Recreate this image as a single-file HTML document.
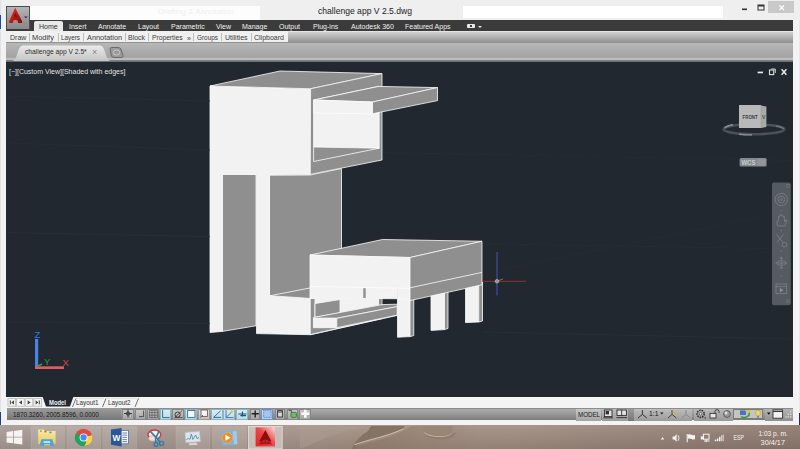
<!DOCTYPE html>
<html>
<head>
<meta charset="utf-8">
<title>challenge app V 2.5.dwg</title>
<style>
html,body{margin:0;padding:0;}
body{width:800px;height:449px;overflow:hidden;position:relative;background:#f2f2f2;font-family:"Liberation Sans",sans-serif;}
.abs{position:absolute;}
.t{position:absolute;white-space:nowrap;line-height:1;}
#titlebar{left:0;top:0;width:800px;height:20px;background:#efefef;}
#tabbar{left:29px;top:20px;width:765px;height:11px;background:#3b3b3b;}
#row2{left:6px;top:31px;width:788px;height:12px;background:linear-gradient(#cfcfcf,#8e8e8e);border-top:1px solid #e4e4e4;box-sizing:border-box;}
#row2l{left:6px;top:31px;width:282px;height:11px;background:#f0f0f0;}
#row3{left:6px;top:43px;width:788px;height:17.5px;background:linear-gradient(#b8b8b8 0%,#a2a2a2 80%,#bcbcbc 83%,#bebebe 100%);}
#row3b{left:6px;top:60px;width:788px;height:2.6px;background:linear-gradient(#8a8a8a,#6a6a6a 60%,#44484c);}
#draw{left:6px;top:62.4px;width:787.4px;height:334.8px;background:#212830;}
.tab1{font-size:7px;line-height:7px;color:#f0f0f0;top:22.5px;}
.tab2{font-size:7px;line-height:7px;color:#3a3a3a;top:34px;}
.sep{position:absolute;top:33px;width:1px;height:8px;background:#bcbcbc;}
.sb{top:408.6px;height:11.6px;border:1px solid #888;box-sizing:border-box;}
</style>
</head>
<body>
<!-- title bar -->
<div class="abs" id="titlebar"></div>
<div class="abs" style="left:462.5px;top:5.5px;width:260px;height:12px;background:#ffffff;"></div>
<div class="abs" style="left:29.7px;top:5.5px;width:230px;height:14.5px;background:#fdfdfd;"></div>
<div class="t" style="left:158px;top:8px;font-size:8px;color:#efefef;">Drafting &amp; Annotation</div>
<div class="t" id="title" style="left:318px;top:5.8px;font-size:9.4px;transform:scaleX(0.915);transform-origin:0 0;color:#222;">challenge app V 2.5.dwg</div>
<!-- window buttons -->
<div class="abs" style="left:768px;top:1px;width:26px;height:12px;background:#c9c9c9;"></div>
<svg class="abs" style="left:740px;top:0" width="60" height="20" viewBox="0 0 60 20">
  <rect x="2" y="8.5" width="5" height="1.6" fill="#333"/>
  <rect x="18" y="5" width="6" height="5" fill="none" stroke="#333" stroke-width="1"/>
  <rect x="18" y="5" width="6" height="1.5" fill="#333"/>
  <path d="M39.5 5.5 L44 10 M44 5.5 L39.5 10" stroke="#fff" stroke-width="1.2" fill="none"/>
</svg>

<!-- ribbon tab bar -->
<div class="abs" id="tabbar"></div>
<div class="abs" style="left:34px;top:21px;width:29px;height:11px;background:#e9e9e9;border-radius:2px 2px 0 0;"></div>
<div class="t tab1" style="left:39px;color:#333;">Home</div>
<div class="t tab1" style="left:69px;">Insert</div>
<div class="t tab1" style="left:98px;">Annotate</div>
<div class="t tab1" style="left:138px;">Layout</div>
<div class="t tab1" style="left:171px;">Parametric</div>
<div class="t tab1" style="left:216px;">View</div>
<div class="t tab1" style="left:242px;">Manage</div>
<div class="t tab1" style="left:279px;">Output</div>
<div class="t tab1" style="left:313px;">Plug-ins</div>
<div class="t tab1" style="left:351px;">Autodesk 360</div>
<div class="t tab1" style="left:405px;">Featured Apps</div>
<div class="abs" style="left:467px;top:24px;width:8px;height:4px;background:#e8e8e8;border-radius:1px;"></div>
<div class="abs" style="left:470px;top:25px;width:2px;height:2px;background:#3b3b3b;"></div>
<div class="abs" style="left:478px;top:26px;width:0;height:0;border-left:2px solid transparent;border-right:2px solid transparent;border-top:2px solid #e8e8e8;"></div>

<!-- ribbon panel row -->
<div class="abs" id="row2"></div>
<div class="abs" id="row2l"></div>
<div class="t tab2" style="left:10px;">Draw</div><div class="sep" style="left:29px;"></div>
<div class="t tab2" style="left:32px;font-size:7.45px;">Modify</div><div class="sep" style="left:58px;"></div>
<div class="t tab2" style="left:61px;font-size:6.35px;">Layers</div><div class="sep" style="left:83px;"></div>
<div class="t tab2" style="left:87px;font-size:7.35px;">Annotation</div><div class="sep" style="left:125px;"></div>
<div class="t tab2" style="left:128px;">Block</div><div class="sep" style="left:148px;"></div>
<div class="t tab2" style="left:152px;font-size:6.7px;">Properties</div>
<div class="t tab2" style="left:187px;font-size:7px;top:35px;">»</div><div class="sep" style="left:193px;"></div>
<div class="t tab2" style="left:197px;font-size:6.4px;">Groups</div><div class="sep" style="left:221px;"></div>
<div class="t tab2" style="left:225px;">Utilities</div><div class="sep" style="left:251px;"></div>
<div class="t tab2" style="left:254px;">Clipboard</div>

<!-- file tab row -->
<div class="abs" id="row3"></div>
<div class="abs" id="row3b"></div>
<svg class="abs" style="left:6px;top:43px" width="140" height="19" viewBox="0 0 140 19">
  <defs><linearGradient id="ftab" x1="0" y1="0" x2="0" y2="1"><stop offset="0" stop-color="#ebebeb"/><stop offset="1" stop-color="#c4c4c4"/></linearGradient></defs>
  <path d="M6 18 C12 18 11 2.5 17 2.5 L94 2.5 C100 2.5 99 18 105 18 Z" fill="url(#ftab)"/>
  <path d="M104 6 Q104 4.5 106 4.5 L112 4.5 Q114 4.5 115 6 L117 13 Q117 14.5 115.5 14.5 L108 14.5 Q106 14.5 105.5 13 Z" fill="#9a9a9a" stroke="#6c6c6c" stroke-width="1"/>
  <ellipse cx="110.5" cy="9.5" rx="3.2" ry="2.6" fill="none" stroke="#c8c8c8" stroke-width="1"/>
</svg>
<div class="t" id="ftext" style="left:25px;top:49px;font-size:6.7px;color:#2a2a2a;">challenge app V 2.5*</div>
<div class="t" style="left:92px;top:48px;font-size:9px;color:#888;">×</div>

<!-- app button -->
<div class="abs" style="left:6px;top:5.5px;width:23.7px;height:25px;background:linear-gradient(#b6b6b6,#9c9c9c 50%,#888);border:1px solid #4c4c4c;border-bottom:2px solid #3c3c3c;box-sizing:border-box;"></div>
<svg class="abs" style="left:0;top:0" width="40" height="36" viewBox="0 0 40 36">
  <defs><linearGradient id="alogo" x1="0" y1="0" x2="1" y2="1"><stop offset="0" stop-color="#e23a2c"/><stop offset="0.5" stop-color="#c01c16"/><stop offset="1" stop-color="#7c0c0a"/></linearGradient></defs>
  <path d="M15.2 7.8 L22.2 21.4 L22 22.9 L18.2 22.9 L17.6 20.6 Q15.6 19.6 13.4 20.6 L12.8 22.9 L9.2 22.9 L9 21.4 Z" fill="url(#alogo)"/>
  <path d="M15.4 12.6 L17.4 17.6 Q15.4 17 13.4 17.6 Z" fill="#8e100d"/>
  <path d="M24 16.4 L27.8 16.4 L25.9 18.3 Z" fill="#2a2a66"/>
</svg>
<!-- drawing area -->
<div class="abs" id="draw"></div>
<div class="t" style="left:9px;top:67.5px;font-size:7px;color:#e4e4e4;" id="vlabel">[−][Custom View][Shaded with edges]</div>
<svg class="abs" id="scene" style="left:0;top:0" width="800" height="449" viewBox="0 0 800 449">
  <g stroke="#fbfbfb" stroke-width="0.8" stroke-linejoin="round">
  <!-- column gray faces -->
  <polygon points="222.4,174.4 256,174.4 256,325.8 222.4,331.4" fill="#8f8f8f"/>
  <polygon points="269.5,175 310.3,175 341.5,168.5 341.5,300 269.5,300" fill="#8f8f8f"/>
  <line x1="270" y1="295.7" x2="312" y2="287.6"/>
  <!-- white front: left strip, top box front -->
  <polygon points="210,86 310.6,88.75 310.3,174.5 269.5,175 269.5,295.7 310.3,298.4 310.3,334.7 256.5,333.6 256.5,174.5 222.4,174.4 222.4,331.4 210,332.5" fill="#f2f2f2"/>
  <!-- top box -->
  <polygon points="210,86 280,71 382,73.6 310.6,88.75" fill="#8f8f8f"/>
  <polygon points="310.6,88.75 382,73.6 382,160 310.3,174.3" fill="#8f8f8f"/>
  <polygon points="313.6,100 379.2,86.3 379.2,148.2 313.6,147" fill="#f2f2f2"/>
  <polygon points="313.6,147 379.2,148.2 313.6,161.5" fill="#8f8f8f"/>
  <line x1="313.6" y1="113" x2="379" y2="113.6" stroke="#fbfbfb"/>
  <!-- shelf -->
  <polygon points="313.75,100 378.5,86.4 437.5,87.6 372.5,102" fill="#8f8f8f"/>
  <polygon points="313.75,100 372.5,102 372.5,113.75 313.75,113" fill="#f2f2f2"/>
  <polygon points="372.5,102 437.5,87.6 437.5,100.6 372.5,113.75" fill="#8f8f8f"/>
  <!-- lower box right face -->
  <polygon points="310.3,298 382,298 382,318.6 310.3,334.7" fill="#8f8f8f"/>
  <polygon points="314.5,299 379,299 379,306 314.5,318" fill="#f2f2f2" stroke="none"/>
  <polygon points="315,303.5 340,299.6 340,312.8 315,317.3" fill="#8f8f8f"/>
  <polygon points="313.4,317.5 382,304.6 397.2,304.2 397.2,306.6 336.75,318.3 313.4,318.3" fill="#8f8f8f"/>
  <polygon points="313.4,318.3 336.75,318.3 336.75,327.7 313.4,327.7" fill="#f2f2f2"/>
  <polygon points="336.75,318.3 397.2,306.6 397.2,315.2 336.75,327.7" fill="#8f8f8f"/>
  <line x1="310.3" y1="334.7" x2="397.2" y2="315.4"/>
  <!-- table legs -->
  <polygon points="465.5,286 478.75,283 478.75,322 465.5,322.6" fill="#f2f2f2"/>
  <polygon points="478.75,283 482.5,282 482.5,321 478.75,322" fill="#8f8f8f"/>
  <polygon points="431,294 444.5,291 444.5,329.6 431,330.4" fill="#f2f2f2"/>
  <polygon points="444.5,291 448,290 448,328.4 444.5,329.6" fill="#8f8f8f"/>
  <polygon points="397.5,298 410,298.75 410,336.6 397.5,337.2" fill="#f2f2f2"/>
  <polygon points="410,298.75 413.75,297.5 413.75,335.6 410,336.6" fill="#8f8f8f"/>
  <!-- table body -->
  <polygon points="310,255 382.5,239.5 482,241.25 410,257.5" fill="#8f8f8f"/>
  <polygon points="310,255 410,257.5 410,298.75 310,298.4" fill="#f2f2f2"/>
  <polygon points="410,257.5 482,241.25 482,284.8 410,300.6" fill="#8f8f8f"/>
  <line x1="310" y1="286.4" x2="410" y2="288.4" stroke="#fcfcfc"/>
  <line x1="410" y1="287.8" x2="482" y2="272.4"/>
  <line x1="397.4" y1="288" x2="397.4" y2="298.4" stroke="#e4e4e4" stroke-width="0.6"/>
  <rect x="363.3" y="288.2" width="2.4" height="9.8" fill="#8f8f8f" stroke="none"/>
  <rect x="379.2" y="299" width="2.3" height="4.5" fill="#8f8f8f" stroke="none"/>
  </g>
  <!-- cursor -->
  <line x1="497" y1="252" x2="497" y2="295.5" stroke="#3f4a9a" stroke-width="1.3"/>
  <line x1="482.5" y1="281.3" x2="526" y2="281.3" stroke="#8a3236" stroke-width="1"/>
  <line x1="497" y1="281" x2="503" y2="279" stroke="#4f8a3a" stroke-width="1"/>
  <circle cx="497" cy="281.3" r="1.8" fill="#8d9499" stroke="#c8c8c8" stroke-width="0.6"/>
  <!-- faint horizon lines -->
  <g stroke="#283038" stroke-width="0.9" fill="none">
  <line x1="7" y1="232.6" x2="210" y2="236.6"/>
  <line x1="7" y1="322" x2="210" y2="323.4"/>
  <line x1="483" y1="332" x2="793" y2="339"/>
  <line x1="483" y1="243.7" x2="793" y2="249" stroke="#252d35"/>
  <line x1="500" y1="270" x2="793" y2="210" stroke="#252d35"/>
  <line x1="383" y1="152.6" x2="793" y2="160.4" stroke="#242c34"/>
  <line x1="7" y1="96" x2="210" y2="101" stroke="#252d35"/>
  <line x1="7" y1="143" x2="210" y2="150" stroke="#252d35"/>
  </g>
  <!-- drawing window controls -->
  <rect x="757.6" y="71.6" width="5.4" height="1.7" fill="#e8e8e8"/>
  <rect x="769.5" y="70" width="4.2" height="4.6" fill="none" stroke="#e0e0e0" stroke-width="1.1"/>
  <path d="M771.2 69 L775.3 69 L775.3 73" fill="none" stroke="#e0e0e0" stroke-width="0.9"/>
  <path d="M781.6 69.3 L786.4 74.7 M786.4 69.3 L781.6 74.7" stroke="#f0f0f0" stroke-width="1.4" fill="none"/>
  <!-- viewcube -->
  <ellipse cx="754" cy="129.3" rx="30.4" ry="5" fill="none" stroke="#4a5157" stroke-width="2.6"/>
  <path d="M724.5 128 Q727 125.6 733 124.8" stroke="#8a9096" stroke-width="1.6" fill="none"/>
  <path d="M739 134.2 Q746 135 752 134.8" stroke="#8a9096" stroke-width="1.4" fill="none"/>
  <path d="M776 126 Q782 127 784 129" stroke="#70767c" stroke-width="1.4" fill="none"/>
  <polygon points="761,105.5 766.4,106.6 766.4,127 761,128" fill="#a9a9a9"/>
  <rect x="739" y="105" width="22" height="23" fill="#b9b9b9"/>
  <line x1="761" y1="105.5" x2="761" y2="128" stroke="#8c8c8c" stroke-width="0.6" stroke-dasharray="1 1"/>
  <text x="742.6" y="119" font-family="Liberation Sans, sans-serif" font-size="5.4" font-weight="bold" fill="#3c4046" textLength="15" lengthAdjust="spacingAndGlyphs">FRONT</text>
  <text x="762" y="119" font-family="Liberation Sans, sans-serif" font-size="5" font-weight="bold" fill="#50545a">V</text>
  <!-- WCS -->
  <rect x="739.6" y="158" width="27" height="8.6" rx="1.5" fill="#858a8f"/>
  <rect x="757.5" y="159.2" width="8" height="6.2" rx="1" fill="#92979c"/>
  <text x="741.4" y="165" font-family="Liberation Sans, sans-serif" font-size="6.4" font-weight="bold" fill="#c9cdd1" textLength="14" lengthAdjust="spacingAndGlyphs">WCS</text>
  <!-- nav bar -->
  <rect x="772" y="182.6" width="18.8" height="122.6" rx="2" fill="#555b61"/>
  <g fill="none" stroke="#747a80" stroke-width="1">
    <circle cx="781.3" cy="199.5" r="6.2"/><circle cx="781.3" cy="199.5" r="3.4"/><circle cx="781.3" cy="199.5" r="1"/>
    <path d="M777.5 226 L776.8 221.5 L778.6 220.8 L778.6 216.3 L780 216.3 L780 214.8 L781.4 214.8 L781.4 215.3 L782.8 215.3 L782.8 216.3 L784.2 216.3 L784.6 222 L786 219.6 L787 220.3 L785 226 Z"/>
    <path d="M776.5 234.5 L783 242.5 M783.5 234.5 L777 242.5"/><circle cx="784.6" cy="244.6" r="2.3"/>
    <path d="M781.3 257 L781.3 269 M775.5 263 L787 263 M781.3 257 L779.5 259 M781.3 257 L783 259 M781.3 269 L779.5 267 M781.3 269 L783 267"/>
    <ellipse cx="781.3" cy="263" rx="4.6" ry="2.2"/>
    <rect x="776" y="284" width="10.6" height="9.6"/><path d="M776 286.6 L786.6 286.6"/>
  </g>
  <path d="M779.8 287.8 L783.6 290.2 L779.8 292.6 Z" fill="#8a9096"/>
  <g fill="#747a80"><rect x="780.7" y="210" width="1.2" height="1.2"/><rect x="780.7" y="230" width="1.2" height="1.2"/><rect x="780.7" y="250.6" width="1.2" height="1.2"/><rect x="780.7" y="275.6" width="1.2" height="1.2"/>
  <rect x="786.8" y="184.6" width="2.4" height="2.6" fill="none" stroke="#747a80" stroke-width="0.6"/><rect x="786.8" y="300" width="2.4" height="2.6" fill="none" stroke="#747a80" stroke-width="0.6"/></g>
  <!-- UCS icon -->
  <rect x="35" y="339" width="3.2" height="28" fill="#4b82e6"/>
  <rect x="35" y="366.3" width="29" height="2.7" fill="#e25c5c"/>
  <path d="M38 366 L42 364" stroke="#3f9a46" stroke-width="1.5"/>
  <text x="34.5" y="338.3" font-family="Liberation Sans, sans-serif" font-size="9.5" fill="#3d74e0">Z</text>
  <text x="44" y="364.5" font-family="Liberation Sans, sans-serif" font-size="9.5" fill="#2f9a3f">Y</text>
  <text x="62.5" y="366" font-family="Liberation Sans, sans-serif" font-size="9.5" fill="#d04848">X</text>
</svg>


<!-- layout tabs row -->
<div class="abs" style="left:6px;top:397px;width:787px;height:12px;background:#f4f4f4;"></div>
<svg class="abs" style="left:0;top:396px" width="160" height="14" viewBox="0 0 160 14">
  <g fill="#f6f6f6" stroke="#b5b5b5" stroke-width="0.8">
    <rect x="8" y="2.6" width="7.6" height="7.6"/><rect x="16.6" y="2.6" width="7.6" height="7.6"/><rect x="25.2" y="2.6" width="7.6" height="7.6"/><rect x="33.8" y="2.6" width="7.6" height="7.6"/>
  </g>
  <g fill="#444">
    <rect x="9.8" y="4.4" width="1" height="4"/><path d="M14 4.2 L14 8.6 L11.2 6.4 Z"/>
    <path d="M22 4.2 L22 8.6 L19 6.4 Z"/>
    <path d="M27.6 4.2 L27.6 8.6 L30.6 6.4 Z"/>
    <path d="M35.6 4.2 L35.6 8.6 L38.4 6.4 Z"/><rect x="38.8" y="4.4" width="1" height="4"/>
  </g>
  <path d="M42.6 0.8 L73.4 0.8 L70 10.4 L46 10.4 Z" fill="#212830"/>
  <path d="M72.5 11 L76 2.4 M102.5 11 L106 2.4 M135 11 L138.5 2.4" stroke="#555" stroke-width="0.8" fill="none"/>
  <path d="M76 2.4 L104 2.4 M106 2.4 L137 2.4" stroke="#cfcfcf" stroke-width="0.6"/>
</svg>
<div class="t" id="tmodel" style="left:49px;top:398.9px;font-size:7px;transform:scaleX(0.84);transform-origin:0 0;font-weight:bold;color:#f4f4f4;">Model</div>
<div class="t" id="tl1" style="left:76px;top:399px;font-size:7.2px;transform:scaleX(0.875);transform-origin:0 0;color:#333;">Layout1</div>
<div class="t" id="tl2" style="left:108px;top:399px;font-size:7.2px;transform:scaleX(0.875);transform-origin:0 0;color:#333;">Layout2</div>

<!-- status bar -->
<div class="abs" style="left:7px;top:407.7px;width:787px;height:12.8px;background:linear-gradient(#6e6e6e,#a8a8a8 8%,#a4a4a4 30%,#7c7c7c);"></div>
<div class="abs" style="left:7px;top:408.4px;width:114px;height:12.1px;background:linear-gradient(#9c9c9c,#777);"></div>
<div class="t" id="coords" style="left:13px;top:411.2px;font-size:7.2px;transform:scaleX(0.875);transform-origin:0 0;color:#1c1c1c;">1870.3260, 2005.8596, 0.0000</div>
<div class="abs sb" style="left:122.4px;width:11.199999999999989px;background:linear-gradient(#c6c6c6,#a6a6a6);border-color:#858585;"></div>
<div class="abs sb" style="left:135.4px;width:11.0px;background:linear-gradient(#c6c6c6,#a6a6a6);border-color:#858585;"></div>
<div class="abs sb" style="left:147.2px;width:11.800000000000011px;background:linear-gradient(#c6c6c6,#a6a6a6);border-color:#858585;"></div>
<div class="abs sb" style="left:159.6px;width:11.800000000000011px;background:linear-gradient(#d6edf6,#b6dcea);border-color:#8fb4c6;"></div>
<div class="abs sb" style="left:172.2px;width:12.0px;background:linear-gradient(#c6c6c6,#a6a6a6);border-color:#858585;"></div>
<div class="abs sb" style="left:185px;width:12.199999999999989px;background:linear-gradient(#d6edf6,#b6dcea);border-color:#8fb4c6;"></div>
<div class="abs sb" style="left:198px;width:12.199999999999989px;background:linear-gradient(#dcdcdc,#c2bcbc);border-color:#9a9a9a;"></div>
<div class="abs sb" style="left:211px;width:11.800000000000011px;background:linear-gradient(#d6edf6,#b6dcea);border-color:#8fb4c6;"></div>
<div class="abs sb" style="left:223.4px;width:12.0px;background:linear-gradient(#d6edf6,#b6dcea);border-color:#8fb4c6;"></div>
<div class="abs sb" style="left:236px;width:12.400000000000006px;background:linear-gradient(#d6edf6,#b6dcea);border-color:#8fb4c6;"></div>
<div class="abs sb" style="left:249.8px;width:10.599999999999966px;background:linear-gradient(#c6c6c6,#a6a6a6);border-color:#858585;"></div>
<div class="abs sb" style="left:261.4px;width:12.0px;background:linear-gradient(#cfe2f6,#b2cdec);border-color:#6f92c4;"></div>
<div class="abs sb" style="left:274.8px;width:10.599999999999966px;background:linear-gradient(#c6c6c6,#a6a6a6);border-color:#858585;"></div>
<div class="abs sb" style="left:286.6px;width:11.599999999999966px;background:linear-gradient(#c6c6c6,#a6a6a6);border-color:#858585;"></div>
<div class="abs sb" style="left:299.4px;width:11.800000000000011px;background:linear-gradient(#c6c6c6,#a6a6a6);border-color:#858585;"></div>
<svg class="abs" style="left:0;top:407.3px" width="800" height="14" viewBox="0 408 800 14">
  <g fill="none" stroke="#333" stroke-width="0.9">
    <path d="M128 410.5 L128 418.5 M124 414.5 L132 414.5"/><circle cx="128" cy="414.5" r="1.6" fill="#555"/><circle cx="130.6" cy="417" r="1.2" fill="#e8e8e8" stroke="#555" stroke-width="0.5"/>
    <path d="M139 417.6 L143.6 417.6 L143.6 411.6" stroke="#444"/>
    <path d="M149.4 411.2 H157.4 V418.6 H149.4 Z M152 411.2 V418.6 M154.8 411.2 V418.6 M149.4 413.6 H157.4 M149.4 416.2 H157.4" stroke="#555" stroke-width="0.7"/>
    <path d="M162.6 411 L162.6 418.6 L169.6 418.6" stroke="#2f5f86"/>
    <circle cx="177.6" cy="415.6" r="2.6" stroke="#333"/><path d="M174.6 418.6 L182.4 411.4 M174.6 418.6 L182.6 418.6" stroke="#333" stroke-width="0.7"/>
    <rect x="187.6" y="411.4" width="7.4" height="7" fill="#f4f8fb" stroke="#3b6a8a"/>
    <rect x="201" y="411" width="6.4" height="6.4" fill="#f6f6f6" stroke="#7a5a5a"/><path d="M200.4 418.6 L203 416" stroke="#a04040"/>
    <path d="M213.6 418.4 L220.6 411.8 M213.6 418.4 L221 418.4" stroke="#2f5f86"/>
    <path d="M226 411 L226 418.6 L233.6 418.6 M226.4 418.2 L232 412.6" stroke="#2f5f86" stroke-width="0.8"/><circle cx="232" cy="412.4" r="1.3" fill="#e8c838" stroke="none"/>
    <path d="M238.4 415 H246.4 M242.4 412.6 V417.4 M240.4 416.6 H246" stroke="#1f4f76" stroke-width="1.1"/>
    <path d="M251.6 414.8 H258.8 M255.2 411.4 V418.4" stroke="#222" stroke-width="1.4"/>
    <rect x="263.6" y="411.2" width="7.6" height="7.2" fill="#a4c6ee" stroke="#4a78c0" stroke-width="0.8" stroke-dasharray="1 0.6"/>
    <rect x="277.6" y="411.6" width="4.8" height="6.4" fill="#d8d8d8" stroke="#333"/><path d="M277.6 413 H282.4" stroke="#333"/>
    <path d="M288.6 411.4 L291.4 411.4 L291.4 414" stroke="#444"/><rect x="291" y="413.4" width="5.4" height="5" rx="1" fill="#6fbf5f" stroke="#2f7f2f"/>
    <path d="M305.3 410.8 V418.8 M301.3 414.8 H309.3" stroke="#fafafa" stroke-width="2.6"/>
  </g>
</svg>
<div class="abs" style="left:576px;top:408.5px;width:25px;height:12px;background:linear-gradient(#c6c6c6,#a4a4a4);"></div>
<div class="t" id="tmodel2" style="left:578.4px;top:411.4px;font-size:7px;transform:scaleX(0.885);transform-origin:0 0;color:#1a1a1a;">MODEL</div>
<div class="abs" style="left:602px;top:408.5px;width:26px;height:12px;background:linear-gradient(#bcbcbc,#9c9c9c);"></div>
<div class="abs" style="left:628px;top:408.5px;width:6px;height:12px;background:linear-gradient(#9a9a9a,#767676);"></div>
<div class="abs" style="left:634px;top:408.5px;width:58px;height:12px;background:linear-gradient(#bdbdbd,#9b9b9b);"></div>
<div class="abs" style="left:694px;top:408.5px;width:39px;height:12px;background:linear-gradient(#bababa,#999);"></div>
<div class="abs" style="left:733.4px;top:409.4px;width:30px;height:10px;background:#c4c4c0;border:1px solid #7a7a7a;box-sizing:border-box;"></div>
<div class="abs" style="left:765px;top:408.5px;width:28px;height:12px;background:linear-gradient(#b4b4b4,#909090);"></div>
<div class="t" id="tscale" style="left:649px;top:411.4px;font-size:6.8px;color:#1a1a1a;">1:1</div>
<svg class="abs" style="left:0;top:407.3px" width="800" height="14" viewBox="0 408 800 14">
  <g fill="none" stroke="#2a2a2a" stroke-width="0.9">
    <rect x="604.4" y="411" width="7.6" height="6.6" fill="#e4e4e4"/><rect x="605.6" y="412" width="3.4" height="3.4" fill="#333" stroke="none"/><path d="M603.4 418.8 H613" />
    <rect x="617" y="411" width="9.4" height="5.4" fill="#e4e4e4"/><path d="M621.7 411 V416.4 M616.4 418.6 H627"/>
    <path d="M642.4 411 L642.4 415.4 L638 419 M642.4 415.4 L646.8 419" stroke="#333" stroke-width="1"/>
    <path d="M660 413.4 L663.6 413.4 L661.8 415.6 Z" fill="#222" stroke="none"/>
    <path d="M672 411 L672 415.4 L668 419 M672 415.4 L676.4 419" stroke="#444" stroke-width="1"/><path d="M673 412 L676.6 415.6" stroke="#e0b020" stroke-width="1.4"/>
    <path d="M686 411 L686 415.4 L682 419 M686 415.4 L690.4 419" stroke="#8a8a8a" stroke-width="1"/>
    <circle cx="700.6" cy="414.8" r="3.6" stroke="#333" stroke-width="1.6" stroke-dasharray="1.6 0.9"/><circle cx="700.6" cy="414.8" r="1.4" fill="#ddd" stroke="#333" stroke-width="0.6"/>
    <path d="M704 418.4 L706.4 418.4 L705.2 419.8 Z" fill="#222" stroke="none"/>
    <rect x="710" y="414.4" width="6" height="4.6" fill="#e8e8e8" stroke="#333"/><path d="M715 414.4 V412.4 Q715 410.6 717 410.6 Q719 410.6 719 412.4 V414" stroke="#333"/>
    <circle cx="727" cy="415" r="3.4" fill="#9a9a9a" stroke="#555"/><circle cx="726" cy="414" r="1.4" fill="#e4e4e4" stroke="none"/>
    <rect x="740" y="411.4" width="6" height="4.6" fill="#3f78c8" stroke="none"/><path d="M741 417.6 Q745 420 749 416.4 L749 413" stroke="#3f9a3f" stroke-width="1.6"/><path d="M745 411.6 L748.6 411.6 L748.6 414" stroke="#e8c020" stroke-width="1.4"/>
    <ellipse cx="758" cy="414" rx="2.4" ry="3" fill="#f0d860" stroke="#a89030" stroke-width="0.5"/><rect x="757" y="417" width="2" height="1.8" fill="#888" stroke="none"/>
    <path d="M767 413.6 L770.6 413.6 L768.8 415.8 Z" fill="#111" stroke="none"/>
    <rect x="773" y="410.8" width="9.6" height="8.4" fill="#f2f2f2" stroke="#333"/><path d="M773 412.4 H782.6" stroke="#333" stroke-width="1.2"/>
  </g>
  <g fill="#d8d8d8"><rect x="790" y="412" width="1.4" height="1.4"/><rect x="787.6" y="414.6" width="1.4" height="1.4"/><rect x="790" y="414.6" width="1.4" height="1.4"/><rect x="785.2" y="417.2" width="1.4" height="1.4"/><rect x="787.6" y="417.2" width="1.4" height="1.4"/><rect x="790" y="417.2" width="1.4" height="1.4"/></g>
</svg>


<!-- window bottom border -->
<div class="abs" style="left:1px;top:420.5px;width:798px;height:5px;background:#f3f3f3;"></div>
<div class="abs" style="left:0;top:0;width:1.2px;height:425px;background:#e0e0e5;"></div>
<div class="abs" style="left:0;top:412px;width:1.3px;height:13px;background:#1c3f98;"></div>
<div class="abs" style="left:0;top:15px;width:1.2px;height:14px;background:#1c4aa8;"></div>
<!-- taskbar -->
<svg class="abs" style="left:0;top:425px" width="800" height="24" viewBox="0 425 800 24">
  <defs>
    <linearGradient id="tb" x1="0" y1="0" x2="1" y2="0">
      <stop offset="0" stop-color="#a89b95"/><stop offset="0.33" stop-color="#a5958c"/><stop offset="0.45" stop-color="#a38f82"/><stop offset="0.65" stop-color="#a18c80"/><stop offset="0.8" stop-color="#978277"/><stop offset="1" stop-color="#8e796e"/>
    </linearGradient>
    <linearGradient id="shd" gradientUnits="userSpaceOnUse" x1="356" y1="0" x2="480" y2="0"><stop offset="0" stop-color="#846f5f" stop-opacity="0.6"/><stop offset="0.5" stop-color="#8a7565" stop-opacity="0.35"/><stop offset="1" stop-color="#8a7565" stop-opacity="0"/></linearGradient>
    <linearGradient id="tbv" x1="0" y1="0" x2="0" y2="1"><stop offset="0" stop-color="#fff" stop-opacity="0.08"/><stop offset="1" stop-color="#000" stop-opacity="0.09"/></linearGradient>
  </defs>
  <rect x="0" y="425" width="800" height="24" fill="url(#tb)"/>
  <rect x="0" y="425" width="800" height="24" fill="url(#tbv)"/>
  <!-- wallpaper shapes -->
  <path d="M300 449 L330 436 L350 430 L366 426 L300 426 Z" fill="#ab9b90" opacity="0.5"/>
  <path d="M352 449 L356 446 Q370 442.6 384 438.6 Q398 434 405 429.6 L412 426 L480 426 L480 449 Z" fill="url(#shd)"/>
  <path d="M352 449 L354 444 Q359 436.6 368 431 L371 426 L404.4 426 L403.4 429.4 Q394 434 380 437.6 Q366 441 356.6 445.6 L354 449 Z" fill="#857366"/>
  <path d="M354.4 444.8 Q366 440.6 380 437.2 Q394 433.4 403.6 428.8" fill="none" stroke="#cbbdb0" stroke-width="1.1"/>
  <path d="M423.6 426 L424 432.4 Q429 436.4 440 436.6 Q450 436.6 452.6 432.6 L452 426 Z" fill="#998677"/>
  <path d="M424.4 432.8 Q430 436.8 441 436.8 Q450 436.6 452.4 432.8" fill="none" stroke="#c4b4a6" stroke-width="1"/>
  <path d="M424 434.4 Q432 440 446 439 Q454 438 456 433 L452.6 432.8 Q450 436.8 441 437 Q430 437 424 434.4 Z" fill="#87725f" opacity="0.5"/>
  <!-- task buttons -->
  <g fill="#ffffff" fill-opacity="0.13" stroke="#ffffff" stroke-opacity="0.10" stroke-width="0.8">
    <rect x="31" y="426.4" width="33.6" height="22.6"/>
    <rect x="67" y="426.4" width="33.6" height="22.6"/>
    <rect x="102.8" y="426.4" width="34" height="22.6"/>
    <rect x="176" y="426.4" width="34" height="22.6"/>
    <rect x="212.4" y="426.4" width="34" height="22.6"/>
  </g>
  <rect x="248.4" y="426.4" width="33.8" height="22.6" fill="#d2c9c4" fill-opacity="0.8" stroke="#e6e0dc" stroke-width="0.8"/>
</svg>


<svg class="abs" style="left:0;top:425px" width="800" height="24" viewBox="0 425 800 24">
  <defs>
    <linearGradient id="acad" x1="0" y1="1" x2="1" y2="0"><stop offset="0" stop-color="#e02222"/><stop offset="0.55" stop-color="#ee4a4a"/><stop offset="1" stop-color="#fbdada"/></linearGradient>
    <linearGradient id="fold" x1="0" y1="0" x2="0" y2="1"><stop offset="0" stop-color="#fbe9a4"/><stop offset="1" stop-color="#efc95c"/></linearGradient>
  </defs>
  <!-- start -->
  <g fill="#f6f4f3">
    <path d="M6.6 432 L13 431 L13 436.8 L6.6 436.8 Z"/><path d="M13.8 430.9 L22.3 429.7 L22.3 436.8 L13.8 436.8 Z"/>
    <path d="M6.6 437.6 L13 437.6 L13 443.3 L6.6 442.4 Z"/><path d="M13.8 437.6 L22.3 437.6 L22.3 444.6 L13.8 443.4 Z"/>
  </g>
  <!-- explorer -->
  <path d="M38.2 431 L38.2 429.6 L43.6 429.6 L44.8 431 L55.6 431 L55.6 444 L38.2 444 Z" fill="url(#fold)"/>
  <rect x="40" y="430.4" width="1.6" height="1.4" fill="#5cae4c"/><rect x="44.6" y="430.8" width="1.8" height="1.6" fill="#c8583a"/><rect x="49.4" y="431.6" width="2" height="1.6" fill="#4a8ed0"/>
  <path d="M41.4 439.2 L52.4 439.2 L53.6 443.4 L53.6 445.8 L40.2 445.8 L40.2 443.4 Z" fill="#4aa3dc"/>
  <rect x="43.6" y="441.2" width="6.6" height="1.6" fill="#d8eefa"/>
  <rect x="44" y="444.2" width="6" height="1.2" fill="#f0d060"/>
  <!-- chrome -->
  <circle cx="83.6" cy="437.4" r="8.6" fill="#dd4b3e"/>
  <path d="M83.6 437.4 L76.1 433.2 A8.6 8.6 0 0 0 87.8 444.9 Z" fill="#1da362"/>
  <path d="M83.6 437.4 L91.9 435.2 A8.6 8.6 0 0 1 84.4 446 L87.6 440 Z" fill="#fdd045"/>
  <path d="M83.6 437.4 L87.9 444.9 A8.6 8.6 0 0 0 92 435.4 Z" fill="#fdd045"/>
  <circle cx="83.6" cy="437.4" r="4" fill="#f4f4f4"/><circle cx="83.6" cy="437.4" r="3.1" fill="#4a8af4"/>
  <!-- word -->
  <rect x="120" y="430.4" width="8.4" height="13.4" fill="#f8f8f8" stroke="#2b579a" stroke-width="0.6"/>
  <path d="M122.4 433 H127 M122.4 435.2 H127 M122.4 437.4 H127 M122.4 439.6 H127 M122.4 441.6 H127" stroke="#2b579a" stroke-width="0.7"/>
  <path d="M111 429.6 L121.6 428 L121.6 446.4 L111 444.8 Z" fill="#2b579a"/>
  <text x="112.6" y="440.6" font-family="Liberation Sans, sans-serif" font-size="8.4" font-weight="bold" fill="#ffffff">W</text>
  <!-- snipping -->
  <ellipse cx="154.4" cy="434.6" rx="6.4" ry="4.6" fill="#f6f0f0" stroke="#cf3c3c" stroke-width="1.4"/>
  <ellipse cx="153" cy="438.4" rx="4.4" ry="2.6" fill="#f2dede" stroke="#d88" stroke-width="0.6"/>
  <path d="M150.6 431.6 L160.4 442.2 M159 431.4 L155.4 438.6" stroke="#2f7fa6" stroke-width="1.6" fill="none"/>
  <circle cx="161.6" cy="443.4" r="2" fill="none" stroke="#2f7fa6" stroke-width="1.4"/><circle cx="156" cy="444.4" r="1.9" fill="none" stroke="#2f7fa6" stroke-width="1.4"/>
  <path d="M155.4 438.6 L156 442.4" stroke="#2f7fa6" stroke-width="1.4"/>
  <!-- resmon -->
  <path d="M185 432.4 L199.6 431.2 L200.4 441.6 L185.8 442.6 Z" fill="#dfe4e8" stroke="#b8c0c8" stroke-width="0.6"/>
  <path d="M186.4 439.6 L188.6 438.4 L190 439.4 L191.4 434 L192.8 439.4 L194.2 437.4 L195.6 435 L197 438.6 L199 437.6" fill="none" stroke="#3f97b5" stroke-width="0.9"/>
  <path d="M189.6 443 L196.4 442.6 L197.6 445 L188.8 445.2 Z" fill="#cfd6dc"/>
  <!-- media player -->
  <path d="M221.2 431.6 L235.6 430.4 L237 444.4 L222.6 445.8 Z" fill="#79b5e4"/>
  <path d="M232.6 431.6 L236.6 431 L237.4 444 L234 444.6 Z" fill="#9bcbee"/>
  <circle cx="227.3" cy="437.8" r="5.3" fill="#f08c28"/><circle cx="227.3" cy="437.8" r="5.3" fill="none" stroke="#f8b060" stroke-width="0.6"/>
  <path d="M225.4 434.8 L230.6 437.8 L225.4 440.8 Z" fill="#ffffff"/>
  <!-- autocad -->
  <rect x="255.6" y="427.4" width="19.4" height="19" fill="url(#acad)"/>
  <path d="M265.4 430 L271.4 441.6 L259.2 441.6 Z" fill="#8a0e0e"/>
  <path d="M261 441.6 L269.8 441.6 L272 444.2 L258.6 444.2 Z" fill="#b01818"/>
  <path d="M262.6 441.2 Q265.4 438.6 268.2 441.2" stroke="#e04a4a" stroke-width="0.6" fill="none"/>
  <!-- tray -->
  <path d="M660.8 439.4 L664.2 439.4 L662.5 437 Z" fill="#f4f0ee"/>
  <path d="M672.6 436.4 L674.4 436.4 L676.6 434.2 L676.6 441.8 L674.4 439.6 L672.6 439.6 Z" fill="#f6f2f0"/>
  <path d="M678 435.2 Q680.2 438 678 440.8" stroke="#f6f2f0" stroke-width="0.9" fill="none"/>
  <path d="M687.2 434 L687.2 442.2" stroke="#f6f2f0" stroke-width="1.1"/>
  <path d="M687.8 434.6 Q689.8 433.6 691.6 434.8 Q693.2 435.8 695 434.8 L695 439 Q693.2 440 691.6 439 Q689.8 438 687.8 438.8 Z" fill="#f6f2f0"/>
  <rect x="703.4" y="434.2" width="5.6" height="5" fill="none" stroke="#f6f2f0" stroke-width="1"/>
  <rect x="700.8" y="436.4" width="3.2" height="3" fill="#f6f2f0"/><path d="M704 441 L709.6 441 M706.2 439.4 L706.2 442.2" stroke="#f6f2f0" stroke-width="1"/>
  <g fill="#f6f2f0"><rect x="714.8" y="439.6" width="1.5" height="1.6"/><rect x="716.9" y="438.4" width="1.5" height="2.8"/><rect x="719" y="436.8" width="1.5" height="4.4"/><rect x="721.1" y="435.2" width="1.5" height="6" fill="#d8cec8"/><rect x="723" y="434.4" width="1" height="6.8" fill="#c8bcb4"/></g>
  <text x="733.4" y="440.4" font-family="Liberation Sans, sans-serif" font-size="7" fill="#f8f6f4" textLength="10.5" lengthAdjust="spacingAndGlyphs">ESP</text>
  <text x="758.4" y="436.2" font-family="Liberation Sans, sans-serif" font-size="7.2" fill="#f8f6f4" textLength="29.4" lengthAdjust="spacingAndGlyphs">1:03 p. m.</text>
  <text x="760.6" y="445" font-family="Liberation Sans, sans-serif" font-size="7.2" fill="#f8f6f4" textLength="24.4" lengthAdjust="spacingAndGlyphs">30/4/17</text>
</svg>
<!-- right edge -->
<div class="abs" style="left:793px;top:20px;width:7px;height:405px;background:#f3f3f3;"></div>
<div class="abs" style="left:798.5px;top:413px;width:1.5px;height:12px;background:#1c2f78;"></div>
<div class="abs" style="left:798.5px;top:20px;width:1.5px;height:393px;background:#e6e8ee;"></div>

</body>
</html>
